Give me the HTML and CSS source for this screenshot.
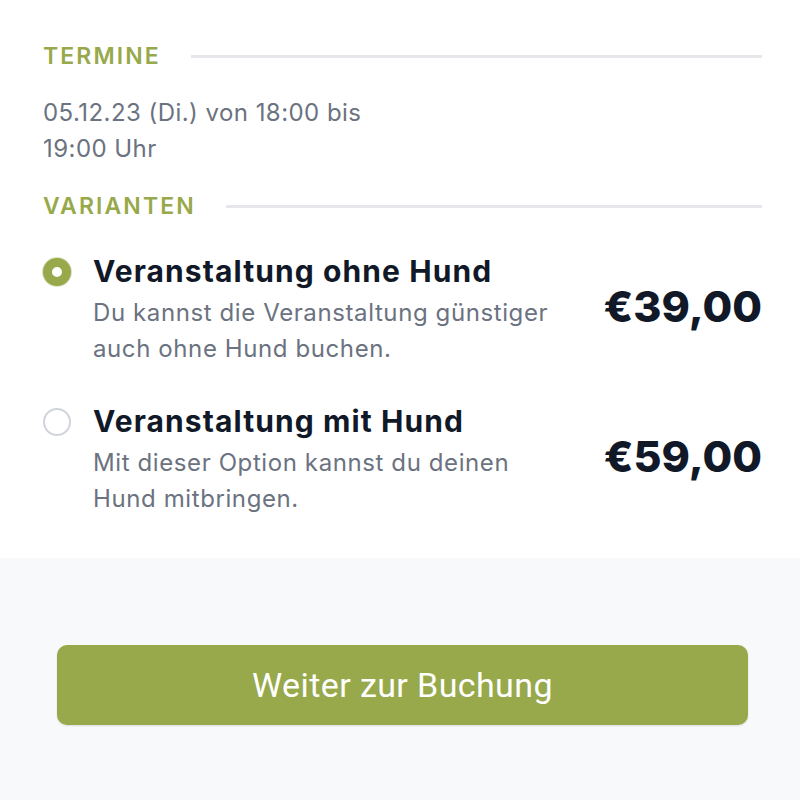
FILE: index.html
```html
<!DOCTYPE html>
<html>
<head>
<meta charset="utf-8">
<link rel="stylesheet" href="styles.css">
</head>
<body>
	<div class="details">
		<div class="section-title"><span>Termine</span><div class="rule"></div></div>
		<p class="date">05.12.23 (Di.) von 18:00 bis 19:00 Uhr</p>

		<div class="section-title"><span>Varianten</span><div class="rule"></div></div>

		<div class="variant">
			<div class="radio checked"></div>
			<div class="info">
				<div class="name">Veranstaltung ohne Hund</div>
				<div class="desc">Du kannst die Veranstaltung günstiger auch ohne Hund buchen.</div>
			</div>
			<div class="price">€39,00</div>
		</div>

		<div class="variant">
			<div class="radio"></div>
			<div class="info">
				<div class="name">Veranstaltung mit Hund</div>
				<div class="desc">Mit dieser Option kannst du deinen Hund mitbringen.</div>
			</div>
			<div class="price">€59,00</div>
		</div>
	</div>

	<div class="footer">
		<button class="book">Weiter zur Buchung</button>
	</div>
</body>
</html>
```

FILE: styles.css
```css
body {
	margin: 0;
	font-family: Inter, "Liberation Sans", sans-serif;
	background: #f8f9fb;
}

.details {
	background: #fff;
	padding: 41px 38px 41px 43px;
}

.section-title {
	display: flex;
	align-items: center;
	gap: 30px;
	font-size: 23px;
	line-height: 30px;
	font-weight: 600;
	letter-spacing: 2.1px;
	text-transform: uppercase;
	color: #97a94b;
}

.rule {
	flex: 1;
	height: 3px;
	background: #e5e7eb;
}

.date {
	margin: 24px 0;
	max-width: 350px;
	font-size: 24px;
	line-height: 36px;
	letter-spacing: 0.45px;
	color: #6b7280;
}

.variant {
	display: flex;
	align-items: center;
	margin-top: 30px;
}

.variant + .variant {
	margin-top: 34px;
}

.radio {
	align-self: flex-start;
	flex: none;
	box-sizing: border-box;
	width: 28px;
	height: 28px;
	margin: 7px 22px 0 0;
	border: 2px solid #d1d5db;
	border-radius: 50%;
	background: #fff;
}

.radio.checked {
	border: 9px solid #97a94b;
	box-shadow: 0 0 0 1px #dde3c3;
}

.info {
	flex: 1;
	padding-right: 44px;
}

.name {
	font-size: 30px;
	line-height: 40px;
	font-weight: 700;
	letter-spacing: 1.1px;
	color: #111827;
}

.desc {
	margin-top: 4px;
	font-size: 24px;
	line-height: 36px;
	letter-spacing: 0.6px;
	color: #6b7280;
}

.price {
	flex: none;
	margin-bottom: 6px;
	font-size: 43px;
	font-weight: 800;
	color: #111827;
}

.footer {
	padding: 87px 52px 75px 57px;
}

.book {
	display: block;
	width: 100%;
	height: 80px;
	border: 0;
	border-radius: 10px;
	background: #97a94b;
	color: #fff;
	font-family: Roboto, "Liberation Sans", sans-serif;
	font-size: 34px;
	letter-spacing: 0.4px;
	box-shadow: 0 1px 2px rgba(0, 0, 0, 0.12);
}
```
